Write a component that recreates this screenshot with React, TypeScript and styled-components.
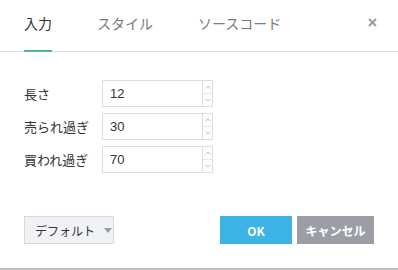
import styled, { createGlobalStyle } from 'styled-components';

const GlobalStyle = createGlobalStyle`
  body {
    margin: 0;
    background: #fff;
    font-family: "Noto Sans CJK JP", "Liberation Sans", sans-serif;
  }
`;

const fields = [
  { label: '長さ', value: '12' },
  { label: '売られ過ぎ', value: '30' },
  { label: '買われ過ぎ', value: '70' },
];

const tabs = ['入力', 'スタイル', 'ソースコード'];

const Chevron = ({ up }: { up?: boolean }) => (
  <svg width="6" height="4" viewBox="0 0 6 4">
    <path
      d={up ? 'M0.5 3.5 L3 1 L5.5 3.5' : 'M0.5 0.5 L3 3 L5.5 0.5'}
      fill="none"
      stroke="#b8bcc4"
      strokeWidth="1"
    />
  </svg>
);

const App = () => {
  return (
    <Dialog>
      <GlobalStyle />
      <Header>
        {tabs.map((t, i) => (
          <Tab key={t} $active={i === 0}>
            {t}
          </Tab>
        ))}
        <Close>
          <svg width="9" height="9" viewBox="0 0 9 9">
            <path d="M1 1 L8 8 M8 1 L1 8" stroke="#9a9ca3" strokeWidth="2" />
          </svg>
        </Close>
      </Header>
      <Body>
        {fields.map((f) => (
          <Row key={f.label}>
            <Label>{f.label}</Label>
            <NumberBox>
              <NumberInput defaultValue={f.value} />
              <Spinner>
                <SpinHalf>
                  <Chevron up />
                </SpinHalf>
                <SpinHalf>
                  <Chevron />
                </SpinHalf>
              </Spinner>
            </NumberBox>
          </Row>
        ))}
      </Body>
      <Footer>
        <DefaultButton>
          デフォルト
          <Caret />
        </DefaultButton>
        <Actions>
          <Button $color="#3cb4e5" $width={72}>OK</Button>
          <Button $color="#9c9ea5" $width={77}>キャンセル</Button>
        </Actions>
      </Footer>
    </Dialog>
  );
};

const Dialog = styled.div`
  width: 398px;
  height: 270px;
  box-sizing: border-box;
  border-bottom: 2px solid #bcbcbc;
  display: flex;
  flex-direction: column;
`;

const Header = styled.div`
  display: flex;
  align-items: flex-start;
  height: 51px;
  padding-left: 24px;
  border-bottom: 1px solid #e0e0e0;
`;

const Tab = styled.div<{ $active?: boolean }>`
  height: 52px;
  box-sizing: border-box;
  margin-right: 45px;
  padding-bottom: 4px;
  display: flex;
  align-items: center;
  font-size: 14px;
  color: ${(p) => (p.$active ? '#333' : '#7a7a7a')};
  border-bottom: 2px solid ${(p) => (p.$active ? '#4fb98a' : 'transparent')};
`;

const Close = styled.div`
  margin-left: auto;
  padding: 18px 21px 0 0;
  line-height: 0;
`;

const Body = styled.div`
  padding: 28px 24px 0;
  display: flex;
  flex-direction: column;
  gap: 6px;
`;

const Row = styled.div`
  display: grid;
  grid-template-columns: 78px auto;
  align-items: center;
  height: 27px;
`;

const Label = styled.span`
  font-size: 13px;
  color: #333;
`;

const NumberBox = styled.div`
  display: flex;
  height: 27px;
`;

const NumberInput = styled.input`
  width: 100px;
  height: 27px;
  box-sizing: border-box;
  border: 1px solid #dcdee2;
  border-right: none;
  padding: 0 7px;
  font-family: "Liberation Sans", Arial, sans-serif;
  font-size: 13px;
  color: #333;
  outline: none;
`;

const Spinner = styled.div`
  width: 11px;
  box-sizing: border-box;
  border: 1px solid #dcdee2;
  display: flex;
  flex-direction: column;
`;

const SpinHalf = styled.div`
  flex: 1;
  display: flex;
  align-items: center;
  justify-content: center;
  & + & {
    border-top: 1px solid #e4e6ea;
  }
`;

const Footer = styled.div`
  margin-top: 43px;
  padding: 0 24px;
  display: flex;
  justify-content: space-between;
`;

const DefaultButton = styled.div`
  width: 90px;
  height: 28px;
  box-sizing: border-box;
  background: #f1f2f6;
  border: 1px solid #d6d8de;
  display: flex;
  align-items: center;
  padding-left: 10px;
  gap: 9px;
  white-space: nowrap;
  font-size: 12px;
  color: #333;
`;

const Caret = styled.span`
  width: 0;
  height: 0;
  border-left: 4px solid transparent;
  border-right: 4px solid transparent;
  border-top: 5px solid #9a9ca3;
`;

const Actions = styled.div`
  display: flex;
  gap: 5px;
`;

const Button = styled.div<{ $color: string; $width: number }>`
  height: 28px;
  width: ${(p) => p.$width}px;
  box-sizing: border-box;
  display: flex;
  align-items: center;
  justify-content: center;
  white-space: nowrap;
  background: ${(p) => p.$color};
  color: #fff;
  font-size: 12px;
  font-weight: bold;
`;

export default App;
